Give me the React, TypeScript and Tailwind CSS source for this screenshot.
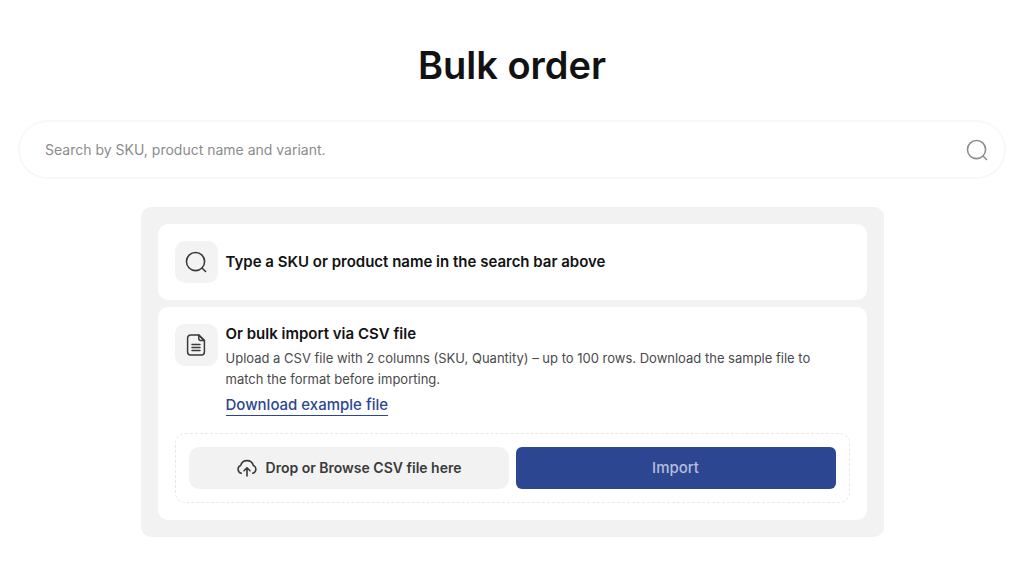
import { useState } from 'react';
import type { ReactNode } from 'react';

function SearchIcon({ className }: { className?: string }) {
  return (
    <svg viewBox="0 0 24 24" fill="none" stroke="currentColor" strokeLinecap="round" className={className} aria-hidden="true">
      <circle cx="11.5" cy="11.5" r="9.9" strokeWidth="1.7" />
      <path d="M18.8 18.8 22.4 22.4" strokeWidth="1.7" />
    </svg>
  );
}

function FileIcon() {
  return (
    <svg viewBox="0 0 20 24" fill="none" stroke="currentColor" strokeWidth="1.5" strokeLinecap="round" strokeLinejoin="round" className="w-5 h-6" aria-hidden="true">
      <path d="M12.8 2H4.6a3 3 0 0 0-3 3v14a3 3 0 0 0 3 3h10.8a3 3 0 0 0 3-3V7.6z" />
      <path d="M12.8 2v3.6a2 2 0 0 0 2 2h3.6z" />
      <path d="M6 11.4h8M6 14.4h8M6 17.4h8" />
    </svg>
  );
}

function UploadIcon() {
  return (
    <svg viewBox="0 0 22 20" fill="none" stroke="currentColor" strokeWidth="1.6" strokeLinecap="round" strokeLinejoin="round" className="w-[22px] h-5" aria-hidden="true">
      <path d="M5.2 15.2a4 4 0 0 1-.6-7.6A6.6 6.6 0 0 1 17.4 7.6a4 4 0 0 1-.6 7.6" />
      <path d="M11 18v-7.6M8 12.8l3-3 3 3" />
    </svg>
  );
}

function IconTile({ children }: { children: ReactNode }) {
  return (
    <div className="w-[43px] h-[42px] shrink-0 rounded-[10px] bg-[#f3f3f3] text-[#3a3a3a] flex items-center justify-center">
      {children}
    </div>
  );
}

export default function App() {
  const [query, setQuery] = useState('');
  const [file, setFile] = useState<File | null>(null);

  return (
    <main className="px-[18px] pt-10 pb-10 bg-white font-['Inter',sans-serif] text-[#121212]">
      <h1 className="text-center text-[38px] leading-[50px] font-semibold">Bulk order</h1>

      {/* Search */}
      <form
        role="search"
        onSubmit={(e) => e.preventDefault()}
        className="mt-[30px] h-[59px] flex items-center rounded-full border-2 border-[#f8f8f8] pl-[25px] pr-4"
      >
        <input
          type="search"
          aria-label="Search products"
          value={query}
          onChange={(e) => setQuery(e.target.value)}
          placeholder="Search by SKU, product name and variant."
          className="flex-1 min-w-0 bg-transparent text-sm outline-none placeholder:text-[#8c8c8c]"
        />
        <button type="submit" aria-label="Search" className="text-[#8c8c8c]">
          <SearchIcon className="w-[22px] h-[22px]" />
        </button>
      </form>

      {/* Empty state */}
      <section className="mt-7 mx-auto max-w-[743px] rounded-[10px] bg-[#f2f2f2] p-[17px] flex flex-col gap-[7px]">
        <div className="rounded-[10px] bg-white p-[17px] flex items-center gap-2">
          <IconTile>
            <SearchIcon className="w-[22px] h-[22px]" />
          </IconTile>
          <h2 className="text-[15px] leading-5 font-semibold">Type a SKU or product name in the search bar above</h2>
        </div>

        <div className="rounded-[10px] bg-white p-[17px]">
          <div className="flex gap-2">
            <IconTile>
              <FileIcon />
            </IconTile>
            <div className="min-w-0">
              <h2 className="text-[15px] leading-5 font-semibold">Or bulk import via CSV file</h2>
              <p className="mt-1 text-[13px] leading-[21px] text-[#4a4a4a]">
                Upload a CSV file with 2 columns (SKU, Quantity) – up to 100 rows. Download the sample file to match the
                format before importing.
              </p>
              <a
                href="#example"
                className="mt-[5px] inline-block border-b border-[#2c4691] text-[15px] leading-5 font-medium text-[#2c4691]"
              >
                Download example file
              </a>
            </div>
          </div>

          {/* Upload */}
          <div className="mt-[17px] rounded-[10px] border border-dashed border-[#e8e8e8] p-[13px] grid grid-cols-2 gap-[7px]">
            <label className="h-[42px] rounded-[10px] bg-[#f2f2f2] text-[#3a3a3a] flex items-center justify-center gap-2 cursor-pointer">
              <UploadIcon />
              <span className="text-sm font-semibold">{file ? file.name : 'Drop or Browse CSV file here'}</span>
              <input
                type="file"
                accept=".csv"
                className="sr-only"
                onChange={(e) => setFile(e.target.files?.[0] ?? null)}
              />
            </label>
            <button type="button" className="h-[42px] rounded-md bg-[#2c4691] text-[15px] font-medium text-[#b5bedb]">
              Import
            </button>
          </div>
        </div>
      </section>
    </main>
  );
}
